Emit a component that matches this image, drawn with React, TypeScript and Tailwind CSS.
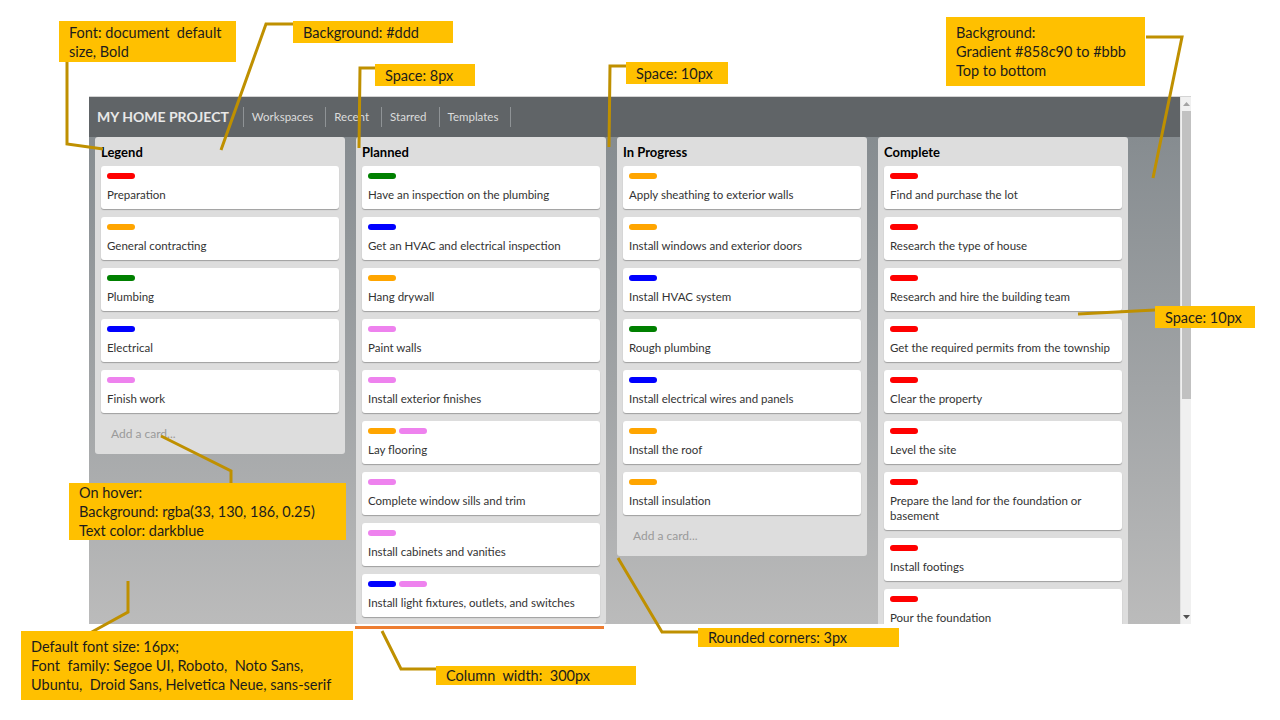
import React from 'react';

type Card = { text: string; labels: string[] };
type Column = { title: string; cards: Card[]; add?: boolean };

const C: Record<string, string> = {
  red: 'bg-[#ff0000]',
  orange: 'bg-[#ffa500]',
  green: 'bg-[#008000]',
  blue: 'bg-[#0000ff]',
  violet: 'bg-[#ee82ee]',
};

const COLUMNS: Column[] = [
  {
    title: 'Legend',
    add: true,
    cards: [
      { text: 'Preparation', labels: ['red'] },
      { text: 'General contracting', labels: ['orange'] },
      { text: 'Plumbing', labels: ['green'] },
      { text: 'Electrical', labels: ['blue'] },
      { text: 'Finish work', labels: ['violet'] },
    ],
  },
  {
    title: 'Planned',
    cards: [
      { text: 'Have an inspection on the plumbing', labels: ['green'] },
      { text: 'Get an HVAC and electrical inspection', labels: ['blue'] },
      { text: 'Hang drywall', labels: ['orange'] },
      { text: 'Paint walls', labels: ['violet'] },
      { text: 'Install exterior finishes', labels: ['violet'] },
      { text: 'Lay flooring', labels: ['orange', 'violet'] },
      { text: 'Complete window sills and trim', labels: ['violet'] },
      { text: 'Install cabinets and vanities', labels: ['violet'] },
      { text: 'Install light fixtures, outlets, and switches', labels: ['blue', 'violet'] },
    ],
  },
  {
    title: 'In Progress',
    add: true,
    cards: [
      { text: 'Apply sheathing to exterior walls', labels: ['orange'] },
      { text: 'Install windows and exterior doors', labels: ['orange'] },
      { text: 'Install HVAC system', labels: ['blue'] },
      { text: 'Rough plumbing', labels: ['green'] },
      { text: 'Install electrical wires and panels', labels: ['blue'] },
      { text: 'Install the roof', labels: ['orange'] },
      { text: 'Install insulation', labels: ['orange'] },
    ],
  },
  {
    title: 'Complete',
    cards: [
      { text: 'Find and purchase the lot', labels: ['red'] },
      { text: 'Research the type of house', labels: ['red'] },
      { text: 'Research and hire the building team', labels: ['red'] },
      { text: 'Get the required permits from the township', labels: ['red'] },
      { text: 'Clear the property', labels: ['red'] },
      { text: 'Level the site', labels: ['red'] },
      { text: 'Prepare the land for the foundation or basement', labels: ['red'] },
      { text: 'Install footings', labels: ['red'] },
      { text: 'Pour the foundation', labels: ['red'] },
    ],
  },
];

const NAV = ['Workspaces', 'Recent', 'Starred', 'Templates'];

const Note: React.FC<{ className: string; lines: string[] }> = ({ className, lines }) => (
  <div
    className={`absolute bg-[#ffc000] px-[10px] flex flex-col justify-center text-[14.5px] leading-[19px] text-[#1c1c1c] ${className}`}
    style={{ fontFamily: 'Lato, "Liberation Sans", sans-serif' }}
  >
    {lines.map((l) => (
      <span key={l} className="whitespace-pre">{l}</span>
    ))}
  </div>
);

export default function App() {
  return (
    <div className="relative w-[1280px] h-[720px] bg-white overflow-hidden">
      <div className="pt-[96px] pl-[89px]">
        <div
          className="flex w-[1102px] h-[528px] border-t border-[#d4d4d4]"
          style={{ fontFamily: 'Lato, "Open Sans", sans-serif' }}
        >
          <div className="flex-1 flex flex-col min-w-0">
            <header className="h-[40px] shrink-0 bg-[#606467] flex items-center pl-[8px]">
              <span className="text-[14px] font-bold text-[#e8e8e8] pr-[14px] border-r border-[#8f9396] leading-[20px]">
                MY HOME PROJECT
              </span>
              {NAV.map((n) => (
                <span
                  key={n}
                  className="text-[11.5px] text-[#dcdcdc] pl-[8px] pr-[12px] border-r border-[#8f9396] leading-[20px]"
                >
                  {n}
                </span>
              ))}
            </header>
            <div className="flex-1 min-h-0 overflow-hidden bg-gradient-to-b from-[#868c90] to-[#bbbbbb] flex items-start gap-[11px] pl-[6px]">
              {COLUMNS.map((col) => (
                <div key={col.title} className="w-[250px] shrink-0 bg-[#dddddd] rounded-[3px] px-[6px] pt-[7px] pb-[7px] flex flex-col">
                  <div className="text-[13px] font-bold leading-[16px] text-black mb-[6px]">{col.title}</div>
                  <div className="flex flex-col gap-[8px]">
                    {col.cards.map((card) => (
                      <div
                        key={card.text}
                        className="bg-white rounded-[3px] shadow-[0_1px_1px_rgba(0,0,0,0.28)] px-[6px] pt-[7px] pb-[7px]"
                      >
                        <div className="flex gap-[3px]">
                          {card.labels.map((l, i) => (
                            <span key={i} className={`w-[28px] h-[6px] rounded-[3px] ${C[l]}`} />
                          ))}
                        </div>
                        <div className="mt-[8px] text-[11.5px] leading-[15px] text-[#333333]">{card.text}</div>
                      </div>
                    ))}
                  </div>
                  {col.add && (
                    <div className="h-[26px] mt-[8px] px-[10px] flex items-center text-[12px] text-[#9a9a9a]">
                      Add a card...
                    </div>
                  )}
                </div>
              ))}
            </div>
          </div>
          <div className="w-[11px] shrink-0 bg-[#f0f0f0] border-l border-[#e2e2e2] flex flex-col items-center">
            <div className="h-[14px] flex items-center justify-center">
              <svg width="7" height="4" viewBox="0 0 7 4"><path d="M0 4 L3.5 0 L7 4 Z" fill="#a3a3a3" /></svg>
            </div>
            <div className="w-[9px] h-[288px] bg-[#c1c1c1]" />
            <div className="flex-1" />
            <div className="h-[14px] flex items-center justify-center">
              <svg width="7" height="4" viewBox="0 0 7 4"><path d="M0 0 L3.5 4 L7 0 Z" fill="#505050" /></svg>
            </div>
          </div>
        </div>
      </div>

      <div className="absolute left-[355px] top-[626px] w-[249px] h-[3px] bg-[#ed7d31]" />

      <svg className="absolute inset-0 pointer-events-none" width="1280" height="720">
        <g fill="none" stroke="#bf9000" strokeWidth="3" strokeLinejoin="miter">
          <polyline points="67,61 67,144 103,149" />
          <polyline points="293,24 266,24 221,150" />
          <polyline points="376,68 360,68 359,148" />
          <polyline points="626,66 610,66 609,147" />
          <polyline points="1146,37 1182,37 1153,178" />
          <polyline points="1078,314 1155,310" />
          <polyline points="161,436 231,471 231,484" />
          <polyline points="128,581 128,612 90,633" />
          <polyline points="382,631 401,669 437,669" />
          <polyline points="618,558 662,632 699,632" />
        </g>
      </svg>

      <Note className="left-[59px] top-[21px] w-[177px] h-[41px]" lines={['Font: document  default', 'size, Bold']} />
      <Note className="left-[293px] top-[21px] w-[160px] h-[22px]" lines={['Background: #ddd']} />
      <Note className="left-[375px] top-[64px] w-[100px] h-[22px]" lines={['Space: 8px']} />
      <Note className="left-[626px] top-[62px] w-[102px] h-[22px]" lines={['Space: 10px']} />
      <Note
        className="left-[946px] top-[17px] w-[199px] h-[69px]"
        lines={['Background:', 'Gradient #858c90 to #bbb', 'Top to bottom']}
      />
      <Note className="left-[1155px] top-[306px] w-[100px] h-[22px]" lines={['Space: 10px']} />
      <Note
        className="left-[69px] top-[483px] w-[277px] h-[57px]"
        lines={['On hover:', 'Background: rgba(33, 130, 186, 0.25)', 'Text color: darkblue']}
      />
      <Note
        className="left-[21px] top-[631px] w-[332px] h-[69px]"
        lines={['Default font size: 16px;', 'Font  family: Segoe UI, Roboto,  Noto Sans,', 'Ubuntu,  Droid Sans, Helvetica Neue, sans-serif']}
      />
      <Note className="left-[436px] top-[666px] w-[200px] h-[19px]" lines={['Column  width:  300px']} />
      <Note className="left-[698px] top-[628px] w-[201px] h-[19px]" lines={['Rounded corners: 3px']} />
    </div>
  );
}
